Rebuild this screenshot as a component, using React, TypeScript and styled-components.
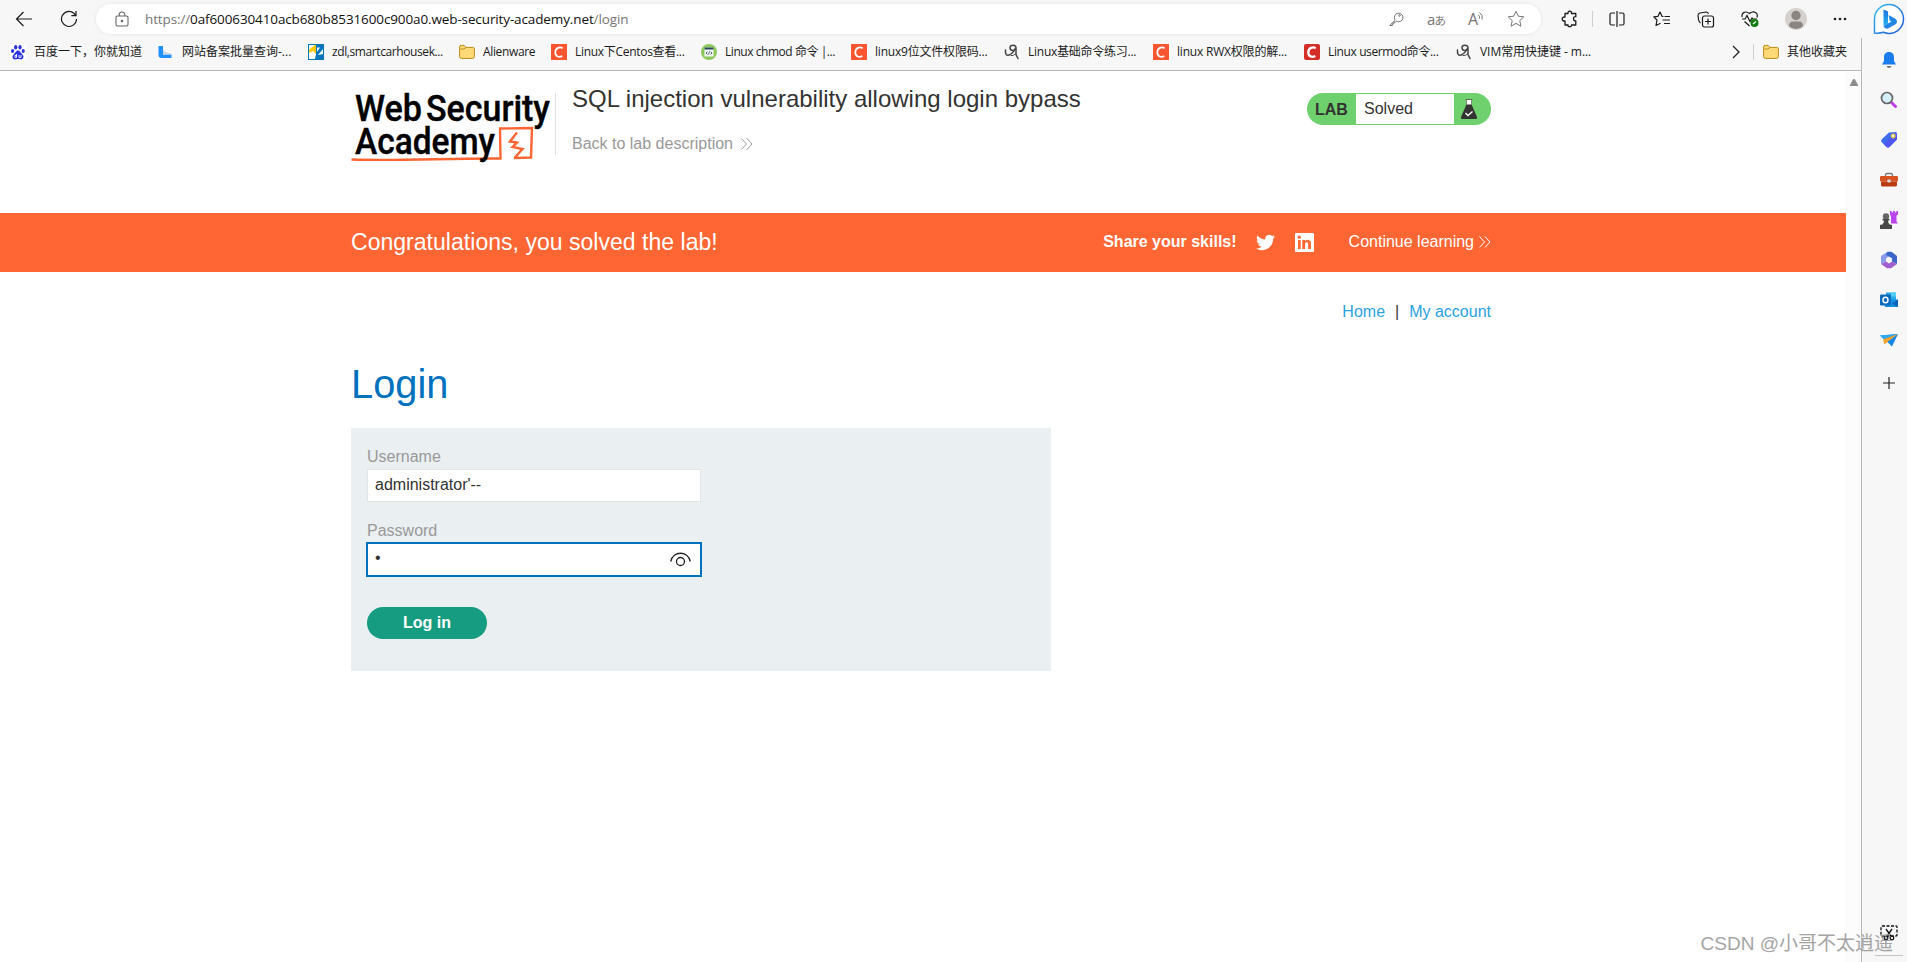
import React, { useState } from 'react';
import styled, { createGlobalStyle } from 'styled-components';

const GlobalStyle = createGlobalStyle`
  * {
    box-sizing: border-box;
  }

  body {
    margin: 0;
    background: #fff;
    overflow: hidden;
    font-family: 'Liberation Sans', Arial, sans-serif;
  }
`;

const Browser = styled.div`
  position: relative;
  display: flex;
  width: 1907px;
  height: 962px;
  background: #f7f7f7;
`;

const Main = styled.div`
  display: flex;
  flex-direction: column;
  width: 1861px;
`;

const Toolbar = styled.div`
  display: flex;
  align-items: center;
  height: 38px;
  color: #1b1b1b;
`;

const NavButtons = styled.div`
  display: flex;
  flex-shrink: 0;
  width: 96px;
  padding-left: 1px;
`;

const ToolButton = styled.div<{ $width?: number }>`
  display: flex;
  flex-shrink: 0;
  align-items: center;
  justify-content: center;
  width: ${p => p.$width || 45}px;
  height: 30px;
`;

const AddressBar = styled.div`
  display: flex;
  flex-shrink: 0;
  align-items: center;
  width: 1445px;
  height: 30px;
  padding: 0 5px 0 18px;
  border-radius: 15px;
  background: #fff;
  box-shadow: 0 0 4px rgba(0, 0, 0, 0.08);
  color: #767676;
  margin-right: 6px;
`;

const Url = styled.div`
  flex: 1;
  margin-left: 15px;
  font-family: 'Open Sans', 'Noto Sans', sans-serif;
  font-size: 13.5px;
  letter-spacing: -0.12px;
  color: #767676;
`;

const Host = styled.span`
  color: #111;
`;

const Translate = styled.span`
  font-family: 'Open Sans', 'Noto Sans CJK JP', sans-serif;
  font-size: 15px;
  letter-spacing: -1px;

  small {
    font-size: 11.5px;
  }
`;

const ReadAloud = styled.span`
  font-family: 'Open Sans', sans-serif;
  font-size: 16px;
`;

const Divider = styled.div<{ $height: number }>`
  flex-shrink: 0;
  width: 1px;
  height: ${p => p.$height}px;
  background: #cfcfcf;
`;

const Bookmarks = styled.div`
  display: flex;
  align-items: center;
  height: 33px;
  padding: 0 0 5px 10px;
  border-bottom: 1px solid #b8b8b8;
`;

const Bookmark = styled.div<{ $width: number }>`
  display: flex;
  align-items: center;
  gap: 8px;
  width: ${p => p.$width}px;
  height: 20px;
`;

const BookmarkTitle = styled.span<{ $tracking?: number }>`
  font-family: 'Open Sans', 'Noto Sans CJK SC', sans-serif;
  font-size: 12px;
  line-height: 18px;
  letter-spacing: ${p => p.$tracking || 0}px;
  color: #1b1b1b;
  white-space: nowrap;
`;

const BookmarksEnd = styled.div`
  display: flex;
  align-items: center;
  margin-left: auto;
  padding-right: 6px;
`;

const OtherBookmarks = styled(Bookmark)`
  padding-left: 9px;
`;

const Viewport = styled.div`
  display: flex;
  flex: 1;
  background: #fff;
`;

const Page = styled.div`
  width: 1846px;
`;

const Scrollbar = styled.div`
  width: 15px;
  padding: 8px 0 0 3px;
  background: #fcfcfc;
  line-height: 0;
`;

const Container = styled.div`
  display: flex;
  width: 1140px;
  margin: 0 355px 0 351px;
`;

const Header = styled(Container)`
  height: 142px;
  padding-top: 22px;
  align-items: flex-start;
`;

const LogoBox = styled.div`
  width: 205px;
  height: 62px;
  border-right: 1px solid #e2e2e2;

  svg {
    overflow: visible;
  }
`;

const Heading = styled.div`
  flex: 1;
  padding-left: 16px;
`;

const LabTitle = styled.h2`
  margin: -8px 0 0;
  font-size: 24px;
  font-weight: 400;
  line-height: 27px;
  color: #333332;
`;

const BackLink = styled.a`
  display: flex;
  align-items: center;
  gap: 8px;
  margin-top: 23px;
  font-size: 16px;
  line-height: 18px;
  color: #999;
`;

const LabStatus = styled.div`
  display: flex;
  align-items: stretch;
  width: 184px;
  height: 32px;
  padding: 1px 0;
  border-radius: 16px;
  background: #6fd16d;
  font-size: 16px;
  line-height: 29px;
  color: #333332;
`;

const LabTag = styled.div`
  width: 49px;
  padding-left: 8px;
  font-weight: 700;
  line-height: 31px;
`;

const LabState = styled.div`
  width: 98px;
  padding-left: 8px;
  background: #fff;
`;

const LabFlask = styled.div`
  padding: 4px 0 0 6px;
  line-height: 0;
`;

const Banner = styled.div`
  height: 59px;
  background: #ff6633;
  color: #fff;
`;

const BannerRow = styled(Container)`
  align-items: center;
  height: 58px;
`;

const BannerTitle = styled.div`
  flex: 1;
  font-size: 23px;
  letter-spacing: 0.03px;
`;

const Share = styled.div`
  display: flex;
  align-items: center;
  font-size: 16px;
  font-weight: 700;
  margin-right: 35px;
`;

const SocialIcon = styled.span`
  margin-left: 19px;
  height: 19px;
  line-height: 0;

  & + & {
    margin-left: 20px;
  }
`;

const Continue = styled.a`
  display: flex;
  align-items: center;
  gap: 5px;
  font-size: 16px;
`;

const AccountNav = styled(Container)`
  justify-content: flex-end;
  gap: 10px;
  padding-top: 31px;
  font-size: 16px;
  line-height: 18px;
  color: #333;
`;

const NavLink = styled.a`
  color: #29a3e2;
`;

const Content = styled(Container)`
  flex-direction: column;
`;

const PageTitle = styled.h1`
  margin: 40px 0 21px;
  font-size: 39.8px;
  font-weight: 400;
  line-height: 46px;
  color: #0071bd;
`;

const LoginForm = styled.form`
  display: flex;
  flex-direction: column;
  align-items: flex-start;
  width: 700px;
  height: 243px;
  padding: 20px 16px;
  background: #eaeff2;
`;

const Label = styled.label`
  font-size: 16px;
  line-height: 18px;
  color: #999;
  margin-bottom: 3px;
`;

const Field = styled.div<{ $focused?: boolean }>`
  display: flex;
  align-items: center;
  width: 334px;
  height: 33px;
  margin-bottom: 20px;
  padding: 0 9px 0 7px;
  border: 1px solid ${p => (p.$focused ? '#0071bd' : '#e4e4e2')};
  box-shadow: ${p => (p.$focused ? '0 0 0 1px #0071bd' : 'none')};
  background: #fff;
`;

const Input = styled.input`
  flex: 1;
  min-width: 0;
  padding: 0 0 1px;
  border: none;
  outline: none;
  background: transparent;
  font-family: 'Liberation Sans', Arial, sans-serif;
  font-size: 16px;
  color: #333;

  &[type='password'] {
    padding-bottom: 3px;
  }
`;

const LoginButton = styled.button`
  width: 120px;
  height: 32px;
  margin-top: 11px;
  padding: 0 0 1px;
  border: none;
  border-radius: 16px;
  background: #169c80;
  font-family: 'Liberation Sans', Arial, sans-serif;
  font-size: 16px;
  font-weight: 700;
  color: #fff;
`;

const Sidebar = styled.div`
  display: flex;
  flex-direction: column;
  width: 46px;
`;

const BingButton = styled.div`
  height: 38px;
  padding: 3px 0 0 12px;
  line-height: 0;
`;

const SidebarApps = styled.div`
  display: flex;
  flex-direction: column;
  align-items: center;
  flex: 1;
  padding: 2px 0 6px 9px;
  border-left: 1px solid #b8b8b8;
`;

const SidebarApp = styled.div`
  display: flex;
  align-items: center;
  justify-content: center;
  width: 36px;
  height: 40px;
`;

const AddApp = styled(SidebarApp)`
  margin-top: 3px;
`;

const SidebarBottom = styled.div`
  display: flex;
  flex-direction: column;
  align-items: center;
  margin-top: auto;
  gap: 14px;
`;

const SidebarRule = styled.div`
  width: 28px;
  height: 1px;
  background: #c4c4c4;
`;

const Watermark = styled.div`
  position: absolute;
  right: 14px;
  bottom: 4px;
  font-family: 'Liberation Sans', 'Noto Sans CJK SC', sans-serif;
  font-size: 19px;
  line-height: 28px;
  color: #9b9b9b;
  opacity: 0.9;
  white-space: nowrap;
`;

type BookmarkIconName = 'baidu' | 'beian' | 'zdl' | 'folder' | 'csdn' | 'csdnDark' | 'code' | 'scribble';

const Folder = () => (
  <svg width="16" height="16" viewBox="0 0 16 16">
    <path d="M.6 4.5V3q0-1.6 1.6-1.6h3l1.8 2h6.8q1.6 0 1.6 1.6v7.6q0 1.8-1.8 1.8H2.4q-1.8 0-1.8-1.8z" fill="#ffd978" stroke="#b98b17" />
    <path d="M1.2 5h3.6L7 3.500" fill="none" stroke="#b98b17" />
  </svg>
);

const BookmarkIcon = ({ name }: { name: BookmarkIconName }) => {
  switch (name) {
    case 'folder':
      return <Folder />;
    case 'baidu':
      return (
        <svg width="16" height="16" viewBox="0 0 16 16">
          <rect width="16" height="16" rx="1" fill="#fff" />
          <g fill="#2a32df">
            <ellipse cx="2.6" cy="7" rx="1.6" ry="2.1" />
            <ellipse cx="5.7" cy="3.2" rx="1.6" ry="2.2" />
            <ellipse cx="10" cy="3.2" rx="1.6" ry="2.2" />
            <ellipse cx="13.2" cy="7" rx="1.6" ry="2.1" />
            <path d="M8 6.500c1.800 0 2.400 2 4 3.500 2.600 2.300 1.500 5.500-1.200 5.500-1.200 0-1.800-.4-2.800-.4s-1.600.4-2.800.4c-2.700 0-3.800-3.200-1.200-5.500 1.600-1.500 2.200-3.500 4-3.500z" />
          </g>
          <path d="M6.500 10v3.400H5v-2h1.500M9 11v2.400h2V11" fill="none" stroke="#fff" strokeWidth=".9" />
        </svg>
      );
    case 'beian':
      return (
        <svg width="16" height="16" viewBox="0 0 16 16">
          <path d="M.5 2h4.500v8.500h8.500V14H3.500q-3 0-3-3z" fill="#1e90ff" />
          <path d="M5 5.500q2 3.500 8.500 4v1H5z" fill="#c6d5e0" />
        </svg>
      );
    case 'zdl':
      return (
        <svg width="16" height="16" viewBox="0 0 16 16">
          <rect x=".5" y=".5" width="15" height="15" fill="#fff" stroke="#0876bd" />
          <path d="M1 5.500 7 1h1v9l-3-3-4 2z" fill="#f8cc11" />
          <path d="M8 1h7v4L10 11l5-1v5H7l1-5z" fill="#0876bd" />
          <path d="M9 3.500h3L9 8z" fill="#fff" />
        </svg>
      );
    case 'csdn':
    case 'csdnDark':
      return (
        <svg width="16" height="16" viewBox="0 0 16 16">
          <rect width="16" height="16" rx={name === 'csdn' ? 0 : 2} fill={name === 'csdn' ? '#fc5531' : '#d32e27'} />
          <path d="M11.700 4.200C9 2.600 4.500 3.500 4.300 8.300c-.1 4.500 4 5.300 7 3.700" fill="none" stroke="#fff" strokeWidth={name === 'csdn' ? 1.7 : 2.3} />
        </svg>
      );
    case 'code':
      return (
        <svg width="16" height="16" viewBox="0 0 16 16">
          <circle cx="8" cy="8" r="8" fill="#8dc95a" />
          <rect x="3.5" y="3.5" width="9" height="9" fill="#f4f7f2" />
          <path d="M3.500 3.500h9v2h-9z" fill="#28445a" />
          <path d="m6.500 7.500-1.500 1.500 1.500 1.500M9.500 7.500 11 9l-1.500 1.500M8.500 7.500l-1 3" fill="none" stroke="#28445a" strokeWidth=".8" />
        </svg>
      );
    default:
      return (
        <svg width="16" height="16" viewBox="0 0 16 16" fill="none" stroke="#454545" strokeWidth="1.5" strokeLinecap="round">
          <path d="M1.500 6c-.5 4 1 6 3.500 5 2.500-1 5-3.500 6.500-6.500" />
          <path d="M12 4c0-4-6-3.500-6-.5 0 4 4.500 3.500 6 .5v6.500l2 4" />
          <path d="M7 11.500c1.500.5 3.500-.5 5-2" strokeWidth="1" />
        </svg>
      );
  }
};

const bookmarks: { icon: BookmarkIconName; title: string; width: number; tracking?: number }[] = [
  { icon: 'baidu', title: '百度一下，你就知道', width: 148 },
  { icon: 'beian', title: '网站备案批量查询-...', width: 150 },
  { icon: 'zdl', title: 'zdl,smartcarhousek...', width: 151, tracking: -0.4 },
  { icon: 'folder', title: 'Alienware', width: 92, tracking: -0.35 },
  { icon: 'csdn', title: 'Linux下Centos查看...', width: 150, tracking: -0.3 },
  { icon: 'code', title: 'Linux chmod 命令 |...', width: 150, tracking: -0.45 },
  { icon: 'csdn', title: 'linux9位文件权限码...', width: 153, tracking: -0.2 },
  { icon: 'scribble', title: 'Linux基础命令练习...', width: 149, tracking: -0.25 },
  { icon: 'csdn', title: 'linux RWX权限的解...', width: 151, tracking: -0.2 },
  { icon: 'csdnDark', title: 'Linux usermod命令...', width: 152, tracking: -0.38 },
  { icon: 'scribble', title: 'VIM常用快捷键 - m...', width: 150, tracking: -0.05 },
];

const Chevrons = ({ color }: { color: string }) => (
  <svg width="12" height="12" viewBox="0 0 12 12" fill="none" stroke={color} strokeWidth="1">
    <path d="m.5.5 5 5.500-5 5.500M6 .5 11 6l-5 5.500" />
  </svg>
);

const Logo = () => (
  <svg width="204" height="76" viewBox="0 0 204 76">
    <path d="M.5 66.500C50 68 100 65 149.500 65.500L149 35.500 181 35 180 64.500 163 65" fill="none" stroke="#ff6633" strokeWidth="2.4" />
    <path d="M166 39.500 159 48.500 166 49.500 161.500 54 171.500 56 164 64.500" fill="none" stroke="#ff6633" strokeWidth="2.4" />
    <g fill="#000" stroke="#000" strokeWidth=".4" fontFamily="Roboto, sans-serif" fontWeight="500" fontSize="37">
      <text x="4" y="28" textLength="67" lengthAdjust="spacingAndGlyphs">Web</text>
      <text x="75" y="28" textLength="124" lengthAdjust="spacingAndGlyphs">Security</text>
      <text x="4" y="61" textLength="140" lengthAdjust="spacingAndGlyphs">Academy</text>
    </g>
  </svg>
);

const Bing = () => (
  <svg width="32" height="32" viewBox="0 0 32 32">
    <defs>
      <linearGradient id="bingRing" x1="0" y1="0" x2="1" y2="1">
        <stop offset="0" stopColor="#35c0f0" />
        <stop offset="1" stopColor="#1d53d8" />
      </linearGradient>
      <linearGradient id="bingMark" x1="0" y1="0" x2="0" y2="1">
        <stop offset="0" stopColor="#1a6fe8" />
        <stop offset="1" stopColor="#23b7ee" />
      </linearGradient>
    </defs>
    <path d="M1.500 30V16A14.500 14.500 0 1 1 16 30.500q-3 0-5.500-1.200-4 1.200-9 .7z" fill="#fff" stroke="url(#bingRing)" strokeWidth="1.5" />
    <path d="M10.500 6.500 15 8.500V20.500L10.500 23z" fill="url(#bingMark)" />
    <path d="m15.500 12 6.500 3.500q3.500 2.500 1 5.500L15 25.500q-3.500.8-4.500-2.500l8-4.500-1.800-1z" fill="#2186e5" />
  </svg>
);

const sidebarIcons = [
  // notifications
  <svg key="bell" width="16" height="18" viewBox="0 0 16 18">
    <path d="M8 1c3.500 0 5 2.500 5 5v4l2 3.500H1L3 10V6c0-2.500 1.500-5 5-5z" fill="#1b7cec" />
    <path d="M5.500 15h5q-.5 2-2.500 2t-2.500-2z" fill="#777" />
  </svg>,
  <svg key="search" width="18" height="18" viewBox="0 0 18 18">
    <path d="m11 11 4.500 4.500" stroke="#c13de8" strokeWidth="3" strokeLinecap="round" />
    <circle cx="7" cy="7" r="5.5" fill="#d5effc" stroke="#666" strokeWidth="1.7" />
  </svg>,
  <svg key="tag" width="18" height="18" viewBox="0 0 18 18">
    <path d="M9 1.500 15.500 1q1.500 0 1.500 1.500V8.500L9.500 16q-1.500 1-3 0L1.500 11q-1-1.500.5-3z" fill="#406cf0" />
    <path d="M17 8.500 9.500 16q-1.500 1-3 0L4 13.500 14 3h3z" fill="#5a48f2" opacity=".6" />
    <circle cx="13.2" cy="5" r="1.8" fill="#fff" stroke="#f4c343" strokeWidth="1.3" />
  </svg>,
  <svg key="tools" width="18" height="16" viewBox="0 0 18 16">
    <path d="M5.500 5V3q0-1.500 1.500-1.500h4q1.500 0 1.500 1.500v2" fill="none" stroke="#777" strokeWidth="1.3" />
    <rect y="4" width="18" height="5.5" rx="1" fill="#d65322" />
    <path d="M1 9.500h16V13q0 1.500-1.500 1.500h-13Q1 14.500 1 13z" fill="#b83b12" />
    <rect x="7.3" y="7.5" width="3.4" height="3" rx="1" fill="#d9d9d9" />
  </svg>,
  <svg key="games" width="18" height="18" viewBox="0 0 18 18">
    <path d="M10 0h1.700v1.500h1.400V0h1.800v1.500h1.400V0H18v3.500l-1.500 1v6l1.500 2h-7V5L10 4z" fill="#b944ee" />
    <circle cx="6" cy="5.5" r="3.2" fill="#666" />
    <path d="M2.500 8h7v1.500H8q0 3 2 4.200h2V18H0v-4.300h2q2-1.200 2-4.200H2.500z" fill="#484848" />
  </svg>,
  <svg key="m365" width="18" height="18" viewBox="0 0 18 18">
    <path d="M7.500.8 1 5v8l5-2.500V7.300L11 4z" fill="#8a9be8" />
    <path d="M7.500.8h4L17 5v8l-5-2.500V7.300L6 4z" fill="#3b67c9" />
    <path d="M1 13 7 17.200h4L17 13l-5-2.500-3 2-3-2z" fill="#a05fce" />
  </svg>,
  <svg key="outlook" width="18" height="18" viewBox="0 0 18 18">
    <path d="M6 1.500h10v8H6z" fill="#28a8ea" />
    <path d="M11 1.500h5v4h-5z" fill="#50d0f5" />
    <path d="M4 8.500h14v6.500q0 1-1 1H5z" fill="#1490df" />
    <path d="m18 8.500-6 4 6 3.500z" fill="#0a63b8" />
    <rect y="3.5" width="11" height="11" rx="1" fill="#0f6cbd" />
    <ellipse cx="5.5" cy="9" rx="2.5" ry="2.8" fill="none" stroke="#fff" strokeWidth="1.4" />
  </svg>,
  <svg key="drop" width="18" height="16" viewBox="0 0 18 16">
    <path d="M0 3.500 18 2 12 14.500 8.500 11z" fill="#1688e8" />
    <path d="M0 3.500 18 2 4 7.500z" fill="#30a7ee" />
    <path d="M3 7.500 18 2 8 9.500 4.500 12.500z" fill="#f2a52c" />
  </svg>,
];

const App: React.FC = () => {
  const [username, setUsername] = useState("administrator'--");
  const [password, setPassword] = useState('1');

  return (
    <Browser>
      <GlobalStyle />
      <Main>
        <Toolbar>
          <NavButtons>
            <ToolButton>
              <svg width="18" height="16" viewBox="0 0 18 16" fill="none" stroke="currentColor" strokeWidth="1.2">
                <path d="M17 8H1.500M8.500 1 1.500 8l7 7" />
              </svg>
            </ToolButton>
            <ToolButton>
              <svg width="18" height="18" viewBox="0 0 18 18" fill="none" stroke="currentColor" strokeWidth="1.2">
                <path d="M16.500 9a7.500 7.500 0 1 1-2.600-5.700L15.800 5.500M16 1v4.700h-4.700" />
              </svg>
            </ToolButton>
          </NavButtons>
          <AddressBar>
            <svg width="16" height="16" viewBox="0 0 16 16" fill="none" stroke="#666" strokeWidth="1.1">
              <rect x="2" y="5" width="12" height="10" rx="1.5" />
              <path d="M5.200 5V3.300Q5.500 1 8 1t2.800 2.300V5" />
              <circle cx="8" cy="10" r=".7" fill="#666" />
            </svg>
            <Url>
              https://<Host>0af600630410acb680b8531600c900a0.web-security-academy.net</Host>/login
            </Url>
            <ToolButton $width={40}>
              <svg width="16" height="16" viewBox="0 0 16 16" fill="none" stroke="currentColor">
                <path d="M7 9.300 1.700 14.500h2.600v-1.700H6V11h1.500l1-.8a4.300 4.300 0 1 0-1.600-1.600z" />
                <circle cx="11.5" cy="4.5" r=".8" />
              </svg>
            </ToolButton>
            <ToolButton $width={40}>
              <Translate>
                a<small>あ</small>
              </Translate>
            </ToolButton>
            <ToolButton $width={40}>
              <ReadAloud>A</ReadAloud>
              <svg width="6" height="14" viewBox="0 0 6 14" fill="none" stroke="currentColor">
                <path d="M0 2.500q2 1.500 1.500 4M1.500.5Q5.500 3 4 7.500" />
              </svg>
            </ToolButton>
            <ToolButton $width={40}>
              <svg width="18" height="18" viewBox="0 0 18 18" fill="none" stroke="currentColor" strokeLinejoin="round">
                <path d="m9 1.200 2.300 5 5.500.6-4 3.800 1.100 5.600L9 13.400l-4.900 2.800 1.100-5.600-4-3.800 5.500-.6z" />
              </svg>
            </ToolButton>
          </AddressBar>
          <ToolButton>
            <svg width="18" height="18" viewBox="0 0 18 18" fill="none" stroke="currentColor" strokeWidth="1.3" strokeLinejoin="round">
              <path d="M4 3.500h3q-.3-2.300 1.700-2.300t1.800 2.300h4.300v3.200q-2.300-.2-2.300 2t2.300 2.300v4h-4.300q.2 1.700-1.800 1.700T7 15H4v-4q-2.800.2-2.800-2T4 7z" />
            </svg>
          </ToolButton>
          <Divider $height={16} />
          <ToolButton $width={47}>
            <svg width="16" height="16" viewBox="0 0 16 16" fill="none" stroke="currentColor" strokeWidth="1.2">
              <path d="M6 2H2.500Q1 2 1 3.500v9Q1 14 2.500 14H6M10 2h3.500Q15 2 15 3.500v9q0 1.500-1.500 1.500H10M8 0v16" />
            </svg>
          </ToolButton>
          <ToolButton $width={43}>
            <svg width="18" height="16" viewBox="0 0 18 16" fill="none" stroke="currentColor" strokeWidth="1.2" strokeLinejoin="round">
              <path d="M10.500 5.500 9 5.300 7 1 5 5.300l-4.200.5L4 9l-1 5.500 4.500-2.200M11.500 5.500H17M9.500 9H17M11 12.500h6" />
            </svg>
          </ToolButton>
          <ToolButton>
            <svg width="18" height="17" viewBox="0 0 18 17" fill="none" stroke="currentColor" strokeWidth="1.2">
              <rect x="5.5" y="5" width="11" height="11" rx="2" />
              <path d="M11 7.500v6M8 10.500h6M3.500 12Q2 11 1.600 9L1 4.500q0-2 2-2.500L9 1q2 0 2.500 1.800" />
            </svg>
          </ToolButton>
          <ToolButton $width={44}>
            <svg width="18" height="18" viewBox="0 0 18 18" fill="none" stroke="currentColor" strokeWidth="1.2">
              <path d="M1.300 7C0 3.500 4 0 8.500 3.500 13 0 17.500 3 16 7.500M3.500 11.500l5 4.500M1 9h3l2-3.500 3 6L11 8l1 1h4" />
              <circle cx="13.5" cy="13" r="4" fill="#107c10" stroke="none" />
              <path d="m12 14 3-2.500" stroke="#fff" />
            </svg>
          </ToolButton>
          <ToolButton $width={47}>
            <svg width="22" height="22" viewBox="0 0 22 22">
              <circle cx="11" cy="11" r="11" fill="#d5d1ce" />
              <circle cx="11" cy="7.5" r="4.7" fill="#8b8581" />
              <path d="M4 18q0-4.500 4-4.500h6q4 0 4 4.500-3 3-7 3t-7-3z" fill="#8b8581" />
            </svg>
          </ToolButton>
          <ToolButton $width={42}>
            <svg width="14" height="4" viewBox="0 0 14 4" fill="currentColor">
              <circle cx="2" cy="2" r="1.3" />
              <circle cx="7" cy="2" r="1.3" />
              <circle cx="12" cy="2" r="1.3" />
            </svg>
          </ToolButton>
        </Toolbar>

        <Bookmarks>
          {bookmarks.map(item => (
            <Bookmark key={item.title} $width={item.width}>
              <BookmarkIcon name={item.icon} />
              <BookmarkTitle $tracking={item.tracking}>{item.title}</BookmarkTitle>
            </Bookmark>
          ))}
          <BookmarksEnd>
            <ToolButton $width={34}>
              <svg width="8" height="14" viewBox="0 0 8 14" fill="none" stroke="#222" strokeWidth="1.3">
                <path d="m1 1 6 6-6 6" />
              </svg>
            </ToolButton>
            <Divider $height={16} />
            <OtherBookmarks $width={101}>
              <Folder />
              <BookmarkTitle>其他收藏夹</BookmarkTitle>
            </OtherBookmarks>
          </BookmarksEnd>
        </Bookmarks>

        <Viewport>
          <Page>
            <Header>
              <LogoBox>
                <Logo />
              </LogoBox>
              <Heading>
                <LabTitle>SQL injection vulnerability allowing login bypass</LabTitle>
                <BackLink>
                  Back to lab description
                  <Chevrons color="#999" />
                </BackLink>
              </Heading>
              <LabStatus>
                <LabTag>LAB</LabTag>
                <LabState>Solved</LabState>
                <LabFlask>
                  <svg width="18" height="22" viewBox="0 0 18 22">
                    <path d="M6 2h6v5H6z" fill="#fff" />
                    <path d="M5.500 1.500h7" stroke="#5a6f59" />
                    <path d="M6.500 2v5M11.500 2v5" stroke="#5a6f59" strokeWidth=".8" />
                    <path d="M6.500 6.500h5l5.500 12.500q.3 2-1 2H2q-1.300 0-1-2z" fill="#333332" />
                    <path d="m5.500 15 2.500 2.500 4.500-4" fill="none" stroke="#fff" strokeWidth="1.4" />
                  </svg>
                </LabFlask>
              </LabStatus>
            </Header>

            <Banner>
              <BannerRow>
                <BannerTitle>Congratulations, you solved the lab!</BannerTitle>
                <Share>
                  Share your skills!
                  <SocialIcon>
                    <svg width="19" height="19" viewBox="0 0 24 24" fill="#fff">
                      <path d="M23.950 4.570a10 10 0 0 1-2.820.77 4.960 4.960 0 0 0 2.160-2.720c-.95.55-2 .95-3.130 1.180a4.920 4.920 0 0 0-8.380 4.480C7.690 8.090 4.070 6.130 1.640 3.160a4.820 4.820 0 0 0-.67 2.480c0 1.710.87 3.210 2.190 4.100a4.900 4.900 0 0 1-2.230-.62v.06a4.920 4.920 0 0 0 3.950 4.830 5 5 0 0 1-2.210.08 4.940 4.940 0 0 0 4.600 3.420A9.870 9.870 0 0 1 0 19.540a13.990 13.990 0 0 0 7.560 2.210c9.050 0 14-7.500 14-13.980 0-.21 0-.42-.02-.63a9.940 9.940 0 0 0 2.460-2.550z" />
                    </svg>
                  </SocialIcon>
                  <SocialIcon>
                    <svg width="19" height="19" viewBox="0 0 19 19">
                      <rect width="19" height="19" rx="1" fill="#fff" />
                      <path d="M3 7h2.700v9H3zM7.300 7H10v1.300c1.500-2.400 6-2 6 2.200V16h-2.800v-5c0-2.500-3.100-2.300-3.100 0v5H7.300z" fill="#ff6633" />
                      <circle cx="4.3" cy="4.2" r="1.6" fill="#ff6633" />
                    </svg>
                  </SocialIcon>
                </Share>
                <Continue>
                  Continue learning
                  <Chevrons color="#fff" />
                </Continue>
              </BannerRow>
            </Banner>

            <AccountNav>
              <NavLink>Home</NavLink>
              <span>|</span>
              <NavLink>My account</NavLink>
            </AccountNav>

            <Content>
              <PageTitle>Login</PageTitle>
              <LoginForm onSubmit={e => e.preventDefault()}>
                <Label>Username</Label>
                <Field>
                  <Input value={username} onChange={e => setUsername(e.target.value)} />
                </Field>
                <Label>Password</Label>
                <Field $focused>
                  <Input type="password" value={password} onChange={e => setPassword(e.target.value)} />
                  <svg width="21" height="15" viewBox="0 0 21 15" fill="none" stroke="#222" strokeWidth="1.3">
                    <path d="M.7 9.500C3 -1.500 18 -1.500 20.300 9.500" />
                    <circle cx="10.5" cy="9.5" r="4" />
                  </svg>
                </Field>
                <LoginButton>Log in</LoginButton>
              </LoginForm>
            </Content>
          </Page>
          <Scrollbar>
            <svg width="10" height="8" viewBox="0 0 10 8">
              <path d="M5 0q.8 0 1.200.8L9.500 7H.5L3.800.8Q4.200 0 5 0z" fill="#8b8b8b" />
            </svg>
          </Scrollbar>
        </Viewport>
      </Main>

      <Sidebar>
        <BingButton>
          <Bing />
        </BingButton>
        <SidebarApps>
          {sidebarIcons.map(icon => (
            <SidebarApp key={icon.key}>{icon}</SidebarApp>
          ))}
          <AddApp>
            <svg width="12" height="12" viewBox="0 0 12 12" stroke="#222" strokeWidth="1.2">
              <path d="M6 0v12M0 6h12" />
            </svg>
          </AddApp>
          <SidebarBottom>
            <svg width="18" height="16" viewBox="0 0 18 16" fill="none" stroke="#111" strokeWidth="1.3">
              <rect x="1" y="1" width="16" height="10" rx="1" strokeDasharray="3 1.5" />
              <path d="m6 4 5 7M12 4l-5 7" />
              <circle cx="6" cy="13" r="1.8" />
              <circle cx="12" cy="13" r="1.8" />
            </svg>
            <SidebarRule />
          </SidebarBottom>
        </SidebarApps>
      </Sidebar>
      <Watermark>CSDN @小哥不太逍遥</Watermark>
    </Browser>
  );
};

export default App;
